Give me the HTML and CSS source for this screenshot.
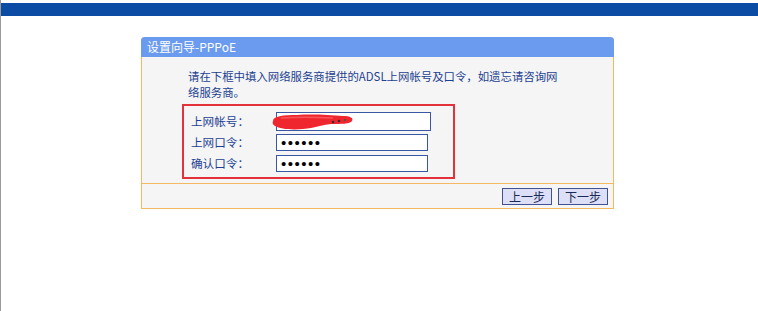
FILE: index.html
```html
<!DOCTYPE html>
<html lang="zh-CN">
<head>
    <meta charset="UTF-8">
    <title>设置向导-PPPoE</title>
    <link rel="stylesheet" href="styles.css">
</head>
<body>
    <div class="topbar"></div>

    <div class="panel">
        <div class="panel-title">设置向导-PPPoE</div>
        <div class="panel-body">
            <p class="tip">请在下框中填入网络服务商提供的ADSL上网帐号及口令，如遗忘请咨询网络服务商。</p>
            <div class="mark">
                <div class="row">
                    <label>上网帐号：</label>
                    <span class="field">
                        <input type="text" class="ipt ipt-wide" value="">
                        <svg class="scribble" width="84" height="16" viewBox="0 0 84 16">
                            <path d="M2 7 C2 2 12 1 26 1 C42 0 58 1 72 2 C79 2 83 4 81 7 C79 10 70 10 60 10 C50 11 44 14 32 15 C20 16 9 15 4 12 C2 11 1 9 2 7 Z" fill="#f0262e"/>
                            <path d="M10 4 C24 3 44 3 62 4" stroke="#f7545a" stroke-width="1.5" fill="none"/>
                            <circle cx="62" cy="8" r="1.3" fill="#3a2a2a"/>
                            <circle cx="68" cy="7" r="1.3" fill="#3a2a2a"/>
                            <circle cx="74" cy="6" r="1.1" fill="#553"/>
                        </svg>
                    </span>
                </div>
                <div class="row">
                    <label>上网口令：</label>
                    <input type="password" class="ipt" value="123456">
                </div>
                <div class="row">
                    <label>确认口令：</label>
                    <input type="password" class="ipt" value="123456">
                </div>
            </div>
        </div>
        <div class="panel-foot">
            <button class="btn">上一步</button>
            <button class="btn">下一步</button>
        </div>
    </div>
</body>
</html>
```
FILE: styles.css
```css
html, body {
    margin: 0;
    padding: 0;
    background: #fff;
}
body {
    font-family: "Noto Sans CJK SC", "Liberation Sans", sans-serif;
    font-size: 12px;
    border-left: 1px solid #9a9a9a;
    min-height: 311px;
    box-sizing: border-box;
}
.topbar {
    margin-top: 3px;
    height: 13px;
    background: #0c4ca5;
}
.panel {
    margin: 21px 0 0 140px;
    width: 471px;
    border: 1px solid #f5b862;
    border-top: none;
    border-radius: 4px 4px 0 0;
    background: #f5f5f5;
}
.panel-title {
    height: 20px;
    line-height: 20px;
    padding-left: 6px;
    color: #fff;
    background: #6b9bef;
    border-radius: 4px 4px 0 0;
    margin: 0 -1px;
}
.panel-body {
    padding: 11px 0 4px 40px;
    border-bottom: 1px solid #f5b862;
}
.tip {
    margin: 0 0 4px 6px;
    width: 380px;
    font-size: 11.4px;
    line-height: 16px;
    color: #1d3f91;
}
.mark {
    width: 257px;
    border: 2px solid #e3323c;
    padding: 6px 5px 5px 7px;
    display: flex;
    flex-direction: column;
    gap: 3px;
}
.row {
    display: flex;
    align-items: center;
    height: 18px;
    color: #1d3f91;
}
.row label {
    width: 85px;
    font-size: 11.6px;
    line-height: 18px;
}
.field {
    position: relative;
    display: flex;
}
.ipt {
    box-sizing: border-box;
    width: 152px;
    height: 17px;
    margin: 0;
    padding: 0 4px;
    border: 1px solid #3a57a6;
    background: #fff;
    font-family: "Liberation Sans", sans-serif;
    font-size: 15px;
    letter-spacing: 1.5px;
    outline: none;
}
.ipt-wide {
    width: 155px;
    height: 19px;
}
.scribble {
    position: absolute;
    left: -5px;
    top: 2px;
}
.panel-foot {
    height: 24px;
    display: flex;
    justify-content: flex-end;
    align-items: center;
    gap: 6px;
    padding-right: 5px;
}
.btn {
    width: 50px;
    height: 17px;
    padding: 0;
    font-family: inherit;
    font-size: 12px;
    line-height: 15px;
    color: #1b2a55;
    background: #dcdff6;
    border: 1px solid #42518f;
    border-radius: 0;
}
```
